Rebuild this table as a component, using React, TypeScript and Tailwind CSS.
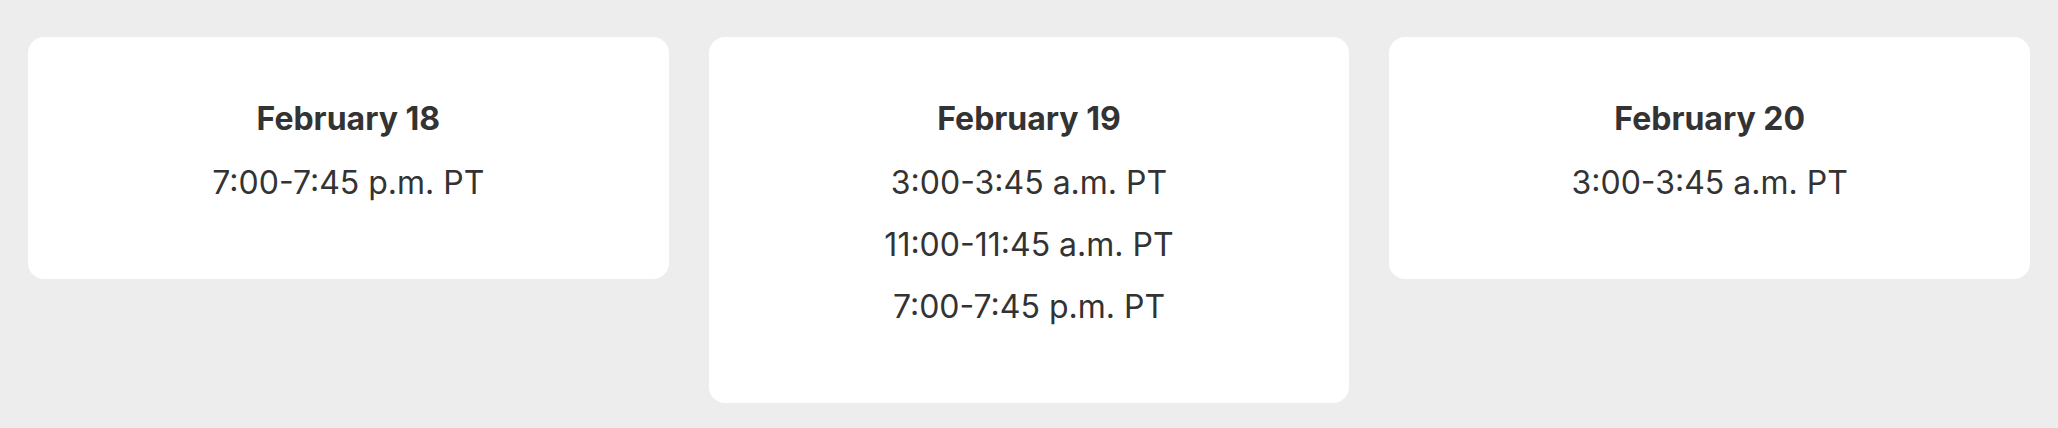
const days = [
  { date: "February 18", times: ["7:00-7:45 p.m. PT"] },
  { date: "February 19", times: ["3:00-3:45 a.m. PT", "11:00-11:45 a.m. PT", "7:00-7:45 p.m. PT"] },
  { date: "February 20", times: ["3:00-3:45 a.m. PT"] },
]

export default function App() {
  return (
    <div className="min-h-screen bg-[#ededed] px-[28px] pt-[37px] font-['Inter',sans-serif] text-[#333333]">
      <div className="grid grid-cols-3 items-start gap-[40px]">
        {days.map((day) => (
          <div key={day.date} className="flex flex-col items-center rounded-2xl bg-white pt-[58px] pb-[72px]">
            <h3 className="mb-[16px] text-[32px] leading-[48px] font-bold">{day.date}</h3>
            <div className="flex flex-col items-center gap-[14px]">
              {day.times.map((t) => (
                <p key={t} className="text-[32px] leading-[48px]">
                  {t}
                </p>
              ))}
            </div>
          </div>
        ))}
      </div>
    </div>
  )
}
